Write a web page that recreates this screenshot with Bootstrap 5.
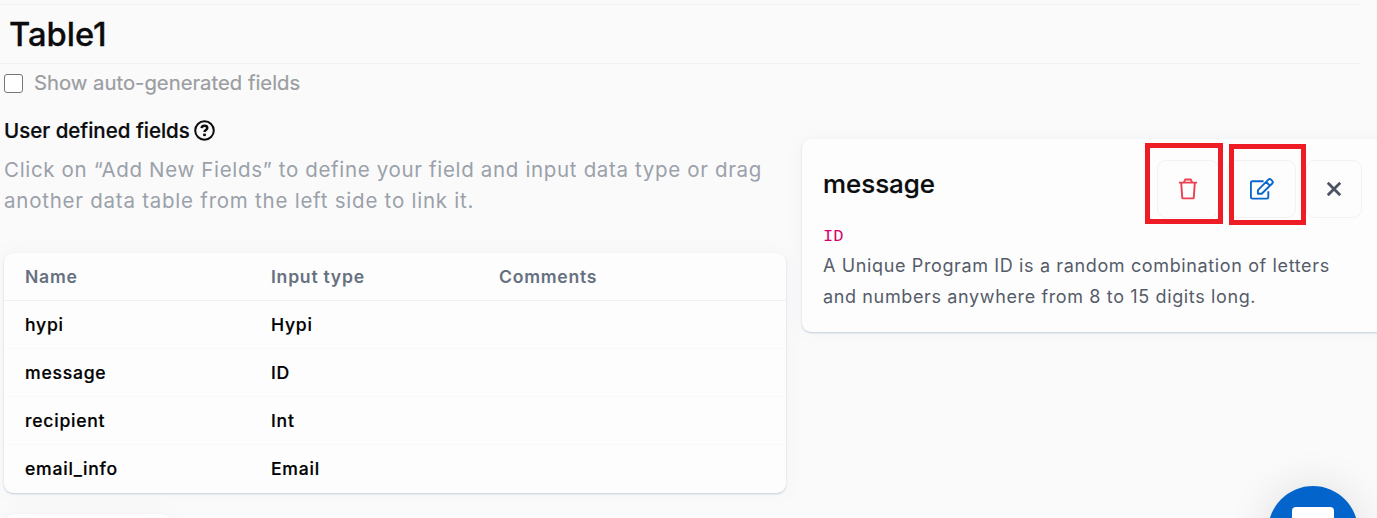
<!DOCTYPE html>
<html lang="en">
<head>
<meta charset="utf-8">
<meta name="viewport" content="width=device-width, initial-scale=1">
<title>Table1</title>
<link href="https://cdn.jsdelivr.net/npm/bootstrap@5.3.0/dist/css/bootstrap.min.css" rel="stylesheet">
<style>
  body { font-family: Inter, "Liberation Sans", sans-serif; background: #fafafa; color: #0b0c0e; height: 518px; overflow: hidden; }
  .title-bar { margin-top: 4px; width: 1361px; height: 60px; padding: 0 9px; border-top: 1px solid #f1f1f2; border-bottom: 1px solid #f1f1f2; }
  .title-bar h1 { font-size: 32.7px; font-weight: 500; line-height: 40px; -webkit-text-stroke: .3px #0b0c0e; }
  .left-pane { width: 782px; margin-left: 4px; }
  .toggle-row { height: 38px; gap: 11px; }
  .toggle-row .form-check-input { width: 19px; height: 19px; border: 1px solid #767676; border-radius: 3px; }
  .toggle-row label { font-size: 20.3px; line-height: 30px; color: #9a9da1; -webkit-text-stroke: .2px #9a9da1; }
  .section-head { height: 58px; gap: 4px; margin-bottom: -6px; }
  .section-head h2 { font-size: 20.5px; font-weight: 500; line-height: 30px; -webkit-text-stroke: .2px #000; }
  .section-head svg { margin-top: -1px; }
  .hint { font-size: 20.5px; line-height: 31px; letter-spacing: .66px; color: #9ba1aa; margin-bottom: 37px; white-space: nowrap; }
  .hint-end { letter-spacing: .76px; }
  .panel { background: #fdfdfd; border: 0; border-radius: 9px; box-shadow: 0 1px 2px #c3cddb, 0 0 18px rgba(110,120,190,.055); }
  .fields-table { font-size: 17.6px; font-weight: 500; letter-spacing: .75px; --bs-table-bg: transparent; --bs-table-color: #000; table-layout: fixed; border-collapse: separate; border-spacing: 0; }
  .fields-table > :not(caption) > * > * { height: 48px; padding: 1px 0 0 21px; border-bottom: 1px solid #f9f9fa; line-height: 26px; vertical-align: middle; }
  .fields-table > tbody > tr > td { -webkit-text-stroke: .2px #000; }
  .fields-table > thead > tr > th { font-weight: 600; color: #677080; border-bottom-color: #f0f1f2; }
  .fields-table > tbody > tr:last-child > td { border-bottom: 0; padding-top: 0; }
  .add-button { width: 168px; height: 50px; margin-top: 21px; }
  .detail-pane { width: 590px; height: 193px; margin: 75px 0 0 16px; padding: 21px; }
  .detail-pane h2 { font-size: 25.9px; font-weight: 500; line-height: 36px; margin-top: 6px; -webkit-text-stroke: .2px #000; }
  .tool-button { height: 58px; border: 1px solid #f2f2f4; border-radius: 9px; background: #fdfdfd; padding: 0; }
  .tool-group { width: 205px; margin-right: 9px; }
  .type-name { font: 17px/26px "Liberation Mono", monospace; color: #d6006c; margin-top: 6px; }
  .about { font-size: 18px; line-height: 31px; letter-spacing: .63px; color: #555c69; white-space: nowrap; }
  .highlight { position: absolute; border: 5px solid #ee1c24; }
  .highlight-delete { left: -12px; top: -17px; width: 78px; height: 81px; }
  .highlight-edit { left: 72px; top: -16px; width: 77px; height: 81px; }
  .chat-button { position: fixed; left: 1268px; top: 486px; width: 90px; height: 90px; background: #0365cc; padding-top: 21px; box-shadow: 0 2px 44px rgba(0,0,0,.12); }
  .chat-bubble { width: 42px; height: 40px; background: #fff; border-radius: 4px; }
</style>
</head>
<body>
<header class="title-bar d-flex align-items-center"><h1 class="m-0">Table1</h1></header>
<main class="d-flex align-items-start">
  <section class="left-pane flex-shrink-0">
    <div class="toggle-row d-flex align-items-center">
      <input class="form-check-input m-0" type="checkbox" id="auto">
      <label for="auto">Show auto-generated fields</label>
    </div>
    <div class="section-head d-flex align-items-center">
      <h2 class="m-0">User defined fields</h2>
      <svg width="21" height="21" viewBox="0 0 21 21" fill="none" stroke="#0b0c0e" stroke-width="2"><circle cx="10.5" cy="10.5" r="9.3"/><path d="M7.6 8.2c.2-1.6 1.3-2.4 2.9-2.4 1.7 0 2.8.9 2.8 2.2 0 1.9-2.8 2-2.8 4" stroke-width="2.5"/><path d="M10.5 13.6v2.5" stroke-width="2.7"/></svg>
    </div>
    <p class="hint">Click on “Add New Fields” to define your field and input data type or drag<br><span class="hint-end">another data table from the left side to link it.</span></p>
    <div class="panel">
      <table class="table fields-table mb-0">
        <colgroup><col style="width:246px"><col style="width:228px"><col></colgroup>
        <thead><tr><th>Name</th><th>Input type</th><th>Comments</th></tr></thead>
        <tbody>
          <tr><td>hypi</td><td>Hypi</td><td></td></tr>
          <tr><td>message</td><td>ID</td><td></td></tr>
          <tr><td>recipient</td><td>Int</td><td></td></tr>
          <tr><td>email_info</td><td>Email</td><td></td></tr>
        </tbody>
      </table>
    </div>
    <div class="panel add-button"></div>
  </section>
  <aside class="panel detail-pane flex-shrink-0">
    <div class="d-flex justify-content-between align-items-start">
      <h2 class="mb-0">message</h2>
      <div class="tool-group d-flex position-relative">
        <button class="tool-button btn d-flex align-items-center justify-content-center" style="width:62px" aria-label="Delete">
          <svg width="18" height="22" viewBox="0 0 18 22" fill="none" stroke="#ee3f50" stroke-width="1.9" stroke-linejoin="round"><path d="M0 4.6h18M2.2 4.8l1 14.6c0 .7.3 1 .9 1h9.8c.6 0 .9-.3.9-1l1-14.6M5 4.4l.8-2.1c.2-.6.5-.8 1-.8h4.4c.5 0 .8.2 1 .8l.8 2.1"/></svg>
        </button>
        <button class="tool-button btn d-flex align-items-center justify-content-center" style="width:69px;margin-left:8px" aria-label="Edit">
          <svg width="24" height="22" viewBox="0 0 24 22" fill="none" stroke="#0867cc" stroke-width="1.9" stroke-linejoin="round"><path d="M13.6 3.2H2.3c-.9 0-1.4.5-1.4 1.4v14.6c0 .9.5 1.4 1.4 1.4h14.6c.9 0 1.4-.5 1.4-1.4v-6"/><path d="M7.9 15.7v-3.5L18.4 1.7c.8-.8 1.8-.8 2.6 0l1.2 1.2c.8.8.8 1.8 0 2.6L11.7 15.7zM16.2 4l3.9 3.9"/></svg>
        </button>
        <button class="tool-button btn d-flex align-items-center justify-content-center" style="width:56px;margin-left:10px" aria-label="Close">
          <svg width="14" height="14" viewBox="0 0 14 14" fill="none" stroke="#4b5264" stroke-width="2.8"><path d="M.8.8l12.4 12.4M13.2.8.8 13.2"/></svg>
        </button>
        <div class="highlight highlight-delete"></div>
        <div class="highlight highlight-edit"></div>
      </div>
    </div>
    <div class="type-name">ID</div>
    <p class="about mb-0">A Unique Program ID is a random combination of letters<br>and numbers anywhere from 8 to 15 digits long.</p>
  </aside>
</main>
<div class="chat-button rounded-circle d-flex justify-content-center"><div class="chat-bubble"></div></div>
<script src="https://cdn.jsdelivr.net/npm/bootstrap@5.3.0/dist/js/bootstrap.bundle.min.js"></script>
</body>
</html>
